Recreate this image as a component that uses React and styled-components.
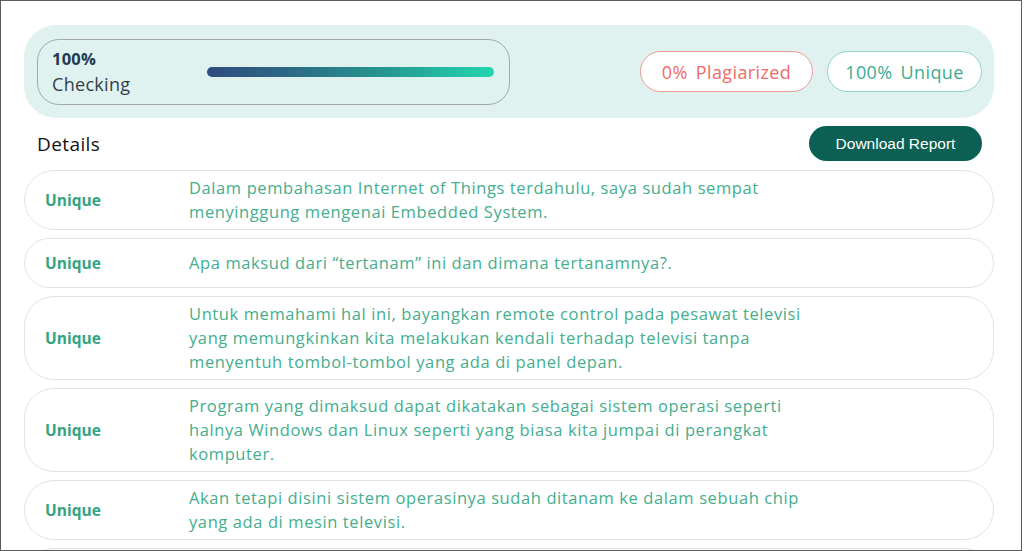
import styled, { createGlobalStyle } from 'styled-components';

const GlobalStyle = createGlobalStyle`
  html, body {
    margin: 0;
    padding: 0;
    background: #fff;
  }
  body {
    font-family: "Open Sans", "Noto Sans", sans-serif;
  }
`;

const Frame = styled.div`
  box-sizing: border-box;
  width: 1022px;
  height: 551px;
  border: 1px solid #5c5c5c;
  padding: 24px 27px 0 23px;
  overflow: hidden;
`;

const Banner = styled.section`
  display: flex;
  align-items: center;
  height: 93px;
  padding: 0 12px 0 13px;
  border-radius: 32px;
  background: #dff2ef;
`;

const CheckBox = styled.div`
  box-sizing: border-box;
  display: flex;
  align-items: center;
  width: 473px;
  height: 66px;
  padding: 0 15px 0 14px;
  border: 1px solid #a3a8a8;
  border-radius: 22px;
`;

const Status = styled.div`
  display: flex;
  flex-direction: column;
`;

const Percent = styled.span`
  font-size: 16.5px;
  font-weight: 700;
  line-height: 24px;
  letter-spacing: 0.2px;
  color: #1d3a4f;
`;

const StatusLabel = styled.span`
  font-size: 18px;
  line-height: 26px;
  letter-spacing: 0.3px;
  color: #34404a;
`;

const Bar = styled.div`
  margin-left: auto;
  width: 287px;
  height: 10px;
  border-radius: 5px;
  background: linear-gradient(90deg, #2f4c7e 0%, #2c6b86 30%, #26948f 60%, #22d5ae 100%);
`;

const Pills = styled.div`
  display: flex;
  gap: 14px;
  margin-left: auto;
`;

const Pill = styled.div`
  box-sizing: border-box;
  display: flex;
  align-items: center;
  justify-content: center;
  gap: 8px;
  width: ${(p) => p.$width}px;
  height: 41px;
  border: 1px solid ${(p) => p.$border};
  border-radius: 21px;
  background: #fff;
  color: ${(p) => p.$color};
  font-size: 18px;
  letter-spacing: 0.4px;
`;

const DetailsBar = styled.div`
  display: flex;
  align-items: center;
  justify-content: space-between;
  margin-top: 8px;
  padding: 0 12px 0 13px;
`;

const Title = styled.h2`
  margin: 0;
  font-size: 19px;
  font-weight: 400;
  letter-spacing: 0.4px;
  color: #111;
`;

const DownloadButton = styled.button`
  width: 173px;
  height: 35px;
  border: none;
  border-radius: 18px;
  background: #0b6053;
  color: #fff;
  font-family: "Liberation Sans", Arial, sans-serif;
  font-size: 15.5px;
  cursor: pointer;
`;

const List = styled.div`
  display: flex;
  flex-direction: column;
  gap: 8px;
  margin-top: 9px;
`;

const Row = styled.div`
  box-sizing: border-box;
  display: flex;
  align-items: center;
  min-height: 50px;
  padding: 5px 20px;
  border: 1px solid #e2e2e2;
  border-radius: 30px;
`;

const Verdict = styled.span`
  flex: 0 0 144px;
  font-size: 15.5px;
  font-weight: 700;
  color: #34a383;
`;

const Sentence = styled.p`
  margin: 0;
  width: 625px;
  font-size: 16.5px;
  line-height: 24px;
  letter-spacing: 0.6px;
  color: #44ae8e;
`;

const sentences = [
  'Dalam pembahasan Internet of Things terdahulu, saya sudah sempat menyinggung mengenai Embedded System.',
  'Apa maksud dari \u201ctertanam\u201d ini dan dimana tertanamnya?.',
  'Untuk memahami hal ini, bayangkan remote control pada pesawat televisi yang memungkinkan kita melakukan kendali terhadap televisi tanpa menyentuh tombol-tombol yang ada di panel depan.',
  'Program yang dimaksud dapat dikatakan sebagai sistem operasi seperti halnya Windows dan Linux seperti yang biasa kita jumpai di perangkat komputer.',
  'Akan tetapi disini sistem operasinya sudah ditanam ke dalam sebuah chip yang ada di mesin televisi.',
  'Dengan demikian perangkat tersebut dapat bekerja sesuai dengan fungsinya.',
];

export default function App() {
  return (
    <>
      <GlobalStyle />
      <Frame>
        <Banner>
          <CheckBox>
            <Status>
              <Percent>100%</Percent>
              <StatusLabel>Checking</StatusLabel>
            </Status>
            <Bar />
          </CheckBox>
          <Pills>
            <Pill $width={173} $border="#f09a92" $color="#ef6a68">
              <span>0%</span>
              <span>Plagiarized</span>
            </Pill>
            <Pill $width={155} $border="#92d4c6" $color="#3dab92">
              <span>100%</span>
              <span>Unique</span>
            </Pill>
          </Pills>
        </Banner>
        <DetailsBar>
          <Title>Details</Title>
          <DownloadButton type="button">Download Report</DownloadButton>
        </DetailsBar>
        <List>
          {sentences.map((text) => (
            <Row key={text}>
              <Verdict>Unique</Verdict>
              <Sentence>{text}</Sentence>
            </Row>
          ))}
        </List>
      </Frame>
    </>
  );
}
